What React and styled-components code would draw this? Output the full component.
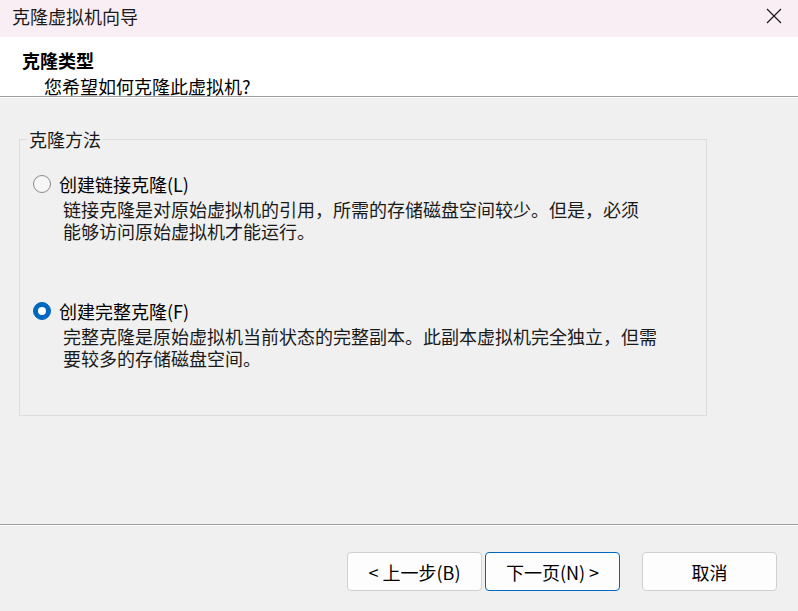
import React from 'react';
import styled, { createGlobalStyle } from 'styled-components';

const GlobalStyle = createGlobalStyle`
  html, body {
    margin: 0;
    padding: 0;
    background: #f0f0f0;
  }
  body {
    font-family: "Noto Sans CJK SC", "Noto Sans", sans-serif;
    font-size: 18px;
    color: #000;
  }
`;

const Window = styled.div`
  width: 798px;
  height: 611px;
  display: flex;
  flex-direction: column;
  background: #f0f0f0;
  overflow: hidden;
`;

const TitleBar = styled.div`
  height: 37px;
  box-sizing: border-box;
  background: #f9eef3;
  display: flex;
  justify-content: space-between;
  align-items: flex-start;
  padding: 5px 0 0 12px;
`;

const TitleText = styled.div`
  line-height: 22px;
  color: #1a1a1a;
`;

const CloseButton = styled.div`
  width: 46px;
  height: 32px;
  margin-top: -5px;
  margin-right: 1px;
  display: flex;
  align-items: center;
  justify-content: center;
`;

const Header = styled.div`
  background: #fff;
  padding: 12px 0 0 22px;
  height: 60px;
  box-sizing: border-box;
  border-bottom: 1px solid #a0a0a0;
  box-shadow: 0 1px 0 #fff;
`;

const HeaderTitle = styled.div`
  font-weight: 700;
  line-height: 22px;
`;

const HeaderSub = styled.div`
  line-height: 22px;
  margin: 4px 0 0 22px;
`;

const Content = styled.div`
  flex: 1;
  padding-top: 42px;
`;

const Group = styled.div`
  margin: 0 91px 0 19px;
  border: 1px solid #dcdcdc;
  padding: 0 0 46px 13px;
`;

const GroupLabel = styled.div`
  width: fit-content;
  line-height: 22px;
  margin: -12px 0 0 -6px;
  padding: 0 2px;
  background: #f0f0f0;
  color: #1a1a1a;
`;

const Option = styled.div`
  margin-top: ${(p) => p.$gap}px;
`;

const OptionRow = styled.div`
  display: flex;
  align-items: center;
  gap: 8px;
  line-height: 22px;
`;

const Radio = styled.span`
  width: 18px;
  height: 18px;
  box-sizing: border-box;
  border-radius: 50%;
  flex: none;
  display: flex;
  align-items: center;
  justify-content: center;
  background: ${(p) => (p.$checked ? '#0067c0' : '#f6f6f6')};
  border: 1px solid ${(p) => (p.$checked ? '#0067c0' : '#8a8a8a')};
  &::after {
    content: '';
    display: ${(p) => (p.$checked ? 'block' : 'none')};
    width: 8px;
    height: 8px;
    border-radius: 50%;
    background: #fff;
  }
`;

const Desc = styled.div`
  margin: 3px 0 0 30px;
  line-height: 22px;
  color: #1a1a1a;
`;

const Footer = styled.div`
  height: 87px;
  box-sizing: border-box;
  border-top: 1px solid #a0a0a0;
  box-shadow: inset 0 1px 0 #fff;
  display: flex;
  justify-content: flex-end;
  align-items: flex-start;
  padding: 27px 21px 0 0;
`;

const Button = styled.button`
  width: 135px;
  height: 39px;
  box-sizing: border-box;
  border-radius: 4px;
  background: #fdfdfd;
  border: 1px solid ${(p) => (p.$primary ? '#0067c0' : '#d0d0d0')};
  font-family: inherit;
  font-size: 18px;
  color: #000;
  padding: 0;
  margin-left: ${(p) => p.$gap || 0}px;
`;

function CloseIcon() {
  return (
    <svg width="16" height="16" viewBox="0 0 16 16">
      <path d="M1 1 L15 15 M15 1 L1 15" stroke="#1a1a1a" strokeWidth="1.2" fill="none" />
    </svg>
  );
}

export default function App() {
  return (
    <>
      <GlobalStyle />
      <Window>
        <TitleBar>
          <TitleText>克隆虚拟机向导</TitleText>
          <CloseButton>
            <CloseIcon />
          </CloseButton>
        </TitleBar>
        <Header>
          <HeaderTitle>克隆类型</HeaderTitle>
          <HeaderSub>您希望如何克隆此虚拟机?</HeaderSub>
        </Header>
        <Content>
          <Group>
            <GroupLabel>克隆方法</GroupLabel>
            <Option $gap={23}>
              <OptionRow>
                <Radio />
                <span>创建链接克隆(L)</span>
              </OptionRow>
              <Desc>
                链接克隆是对原始虚拟机的引用，所需的存储磁盘空间较少。但是，必须
                <br />
                能够访问原始虚拟机才能运行。
              </Desc>
            </Option>
            <Option $gap={58}>
              <OptionRow>
                <Radio $checked />
                <span>创建完整克隆(F)</span>
              </OptionRow>
              <Desc>
                完整克隆是原始虚拟机当前状态的完整副本。此副本虚拟机完全独立，但需
                <br />
                要较多的存储磁盘空间。
              </Desc>
            </Option>
          </Group>
        </Content>
        <Footer>
          <Button>&lt; 上一步(B)</Button>
          <Button $primary $gap={3}>下一页(N) &gt;</Button>
          <Button $gap={22}>取消</Button>
        </Footer>
      </Window>
    </>
  );
}
